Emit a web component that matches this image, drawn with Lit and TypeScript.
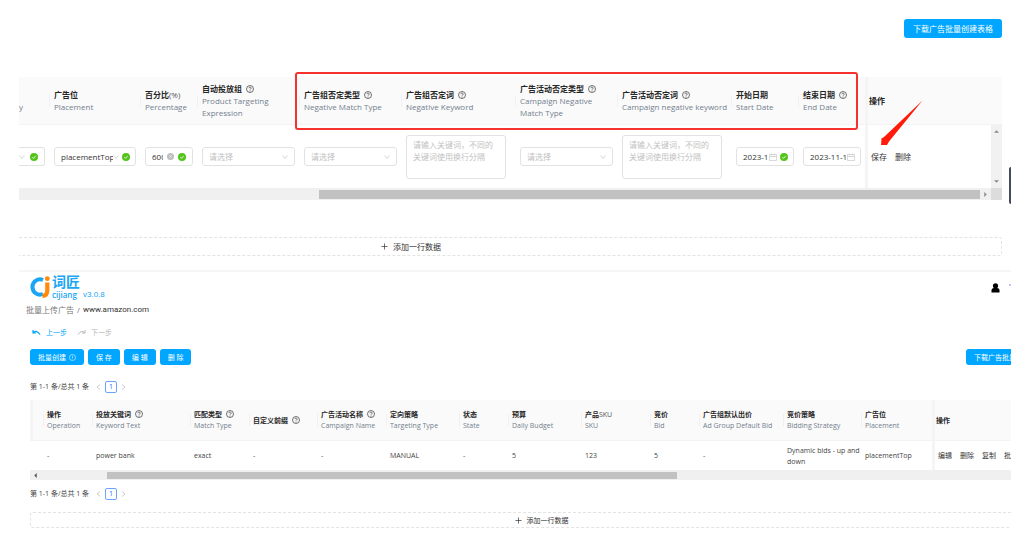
import { LitElement, html, css, svg, nothing } from "lit";
import { customElement } from "lit/decorators.js";

const help = html`<svg class="ic" viewBox="0 0 16 16" aria-hidden="true">
  <circle cx="8" cy="8" r="7" fill="none" stroke="currentColor" stroke-width="1.5" />
  <path d="M5.8 6.4a2.2 2.2 0 1 1 3.2 1.9c-.7.4-1 .7-1 1.4" fill="none" stroke="currentColor" stroke-width="1.5" />
  <circle cx="8" cy="11.8" r="1" fill="currentColor" />
</svg>`;
const info = html`<svg class="ic info" viewBox="0 0 16 16" aria-hidden="true">
  <circle cx="8" cy="8" r="7" fill="none" stroke="currentColor" stroke-width="1.2" />
  <path d="M8 4v5M8 10.5v1.5" stroke="currentColor" stroke-width="1.3" />
</svg>`;
const ok = html`<svg class="ok" viewBox="0 0 16 16" aria-hidden="true">
  <circle cx="8" cy="8" r="8" fill="#52c41a" />
  <path d="M4.6 8.2l2.4 2.6 4.4-5" fill="none" stroke="#fff" stroke-width="1.6" />
</svg>`;
const clear = html`<svg class="clear" viewBox="0 0 16 16" aria-hidden="true">
  <circle cx="8" cy="8" r="8" fill="#bfbfbf" />
  <path d="M5.5 5.5l5 5M10.5 5.5l-5 5" stroke="#fff" stroke-width="1.2" />
</svg>`;
const chevron = html`<svg class="chev" viewBox="0 0 16 16" aria-hidden="true">
  <path d="M1.5 4l6.500 8 6.500-8" fill="none" stroke="#bfbfbf" stroke-width="1.7" />
</svg>`;
const calendar = html`<svg class="cal" viewBox="0 0 16 16" aria-hidden="true">
  <path d="M1 3h14v12H1zM1 7h14M5 1v4M11 1v4" fill="none" stroke="#c4c4c4" stroke-width="1.3" />
</svg>`;
const plus = html`<svg class="plus" viewBox="0 0 16 16" aria-hidden="true">
  <path d="M8 1v14M1 8h14" stroke="currentColor" stroke-width="1.6" />
</svg>`;
const tri = (dir: "up" | "down" | "left" | "right") => {
  const d = {
    up: "M0 6l4-4 4 4z",
    down: "M0 2l4 4 4-4z",
    left: "M6 0L2 4l4 4z",
    right: "M2 0l4 4-4 4z",
  }[dir];
  return html`<svg class="tri" viewBox="0 0 8 8" aria-hidden="true">${svg`<path d=${d} fill="currentColor"/>`}</svg>`;
};

interface Col {
  zh: string;
  tail?: string;
  en?: string[];
  q?: boolean;
  w: string;
  value?: string;
}

const formCols: Col[] = [
  { zh: "广告位", en: ["Placement"], w: "w91" },
  { zh: "百分比", tail: "(%)", en: ["Percentage"], w: "w57" },
  { zh: "自动投放组", en: ["Product Targeting", "Expression"], q: true, w: "w102" },
  { zh: "广告组否定类型", en: ["Negative Match Type"], q: true, w: "w102" },
  { zh: "广告组否定词", en: ["Negative Keyword"], q: true, w: "w114" },
  { zh: "广告活动否定类型", en: ["Campaign Negative", "Match Type"], q: true, w: "w102" },
  { zh: "广告活动否定词", en: ["Campaign negative keyword"], q: true, w: "w114" },
  { zh: "开始日期", en: ["Start Date"], w: "w67" },
  { zh: "结束日期", en: ["End Date"], q: true, w: "w67" },
];

const listCols: Col[] = [
  { zh: "操作", en: ["Operation"], w: "w49", value: "-" },
  { zh: "投放关键词", en: ["Keyword Text"], q: true, w: "w98", value: "power bank" },
  { zh: "匹配类型", en: ["Match Type"], q: true, w: "w59", value: "exact" },
  { zh: "自定义前缀", q: true, w: "w68", value: "-" },
  { zh: "广告活动名称", en: ["Campaign Name"], q: true, w: "w69", value: "-" },
  { zh: "定向策略", en: ["Targeting Type"], w: "w73", value: "MANUAL" },
  { zh: "状态", en: ["State"], w: "w49", value: "-" },
  { zh: "预算", en: ["Daily Budget"], w: "w73", value: "5" },
  { zh: "产品", tail: "SKU", en: ["SKU"], w: "w69", value: "123" },
  { zh: "竞价", en: ["Bid"], w: "w49", value: "5" },
  { zh: "广告组默认出价", en: ["Ad Group Default Bid"], w: "w84", value: "-" },
  { zh: "竞价策略", en: ["Bidding Strategy"], w: "w78", value: "Dynamic bids - up and down" },
  { zh: "广告位", en: ["Placement"], w: "w71", value: "placementTop" },
];

const base = css`
  * { box-sizing: border-box; }
  button, input, select, textarea { font: inherit; color: inherit; margin: 0; }
  button { cursor: pointer; }
  table { border-collapse: separate; border-spacing: 0; table-layout: fixed; width: 100%; }
  th { background: #fafafa; text-align: left; font-weight: 400; padding: 0 0 0 5px; white-space: nowrap; position: relative; border-bottom: 1px solid #f3f3f3; }
  th b { font-weight: 700; color: #262626; }
  th small { display: block; font-size: inherit; color: #737f8e; }
  th .tail { color: #555; }
  th.sep::before { content: ""; position: absolute; left: 0; top: 50%; height: 12px; margin-top: -6px; width: 1px; background: #f0f0f0; }
  td { padding: 0 5px; vertical-align: middle; }
  .fixed { border-left: 3px solid #f5f5f5; }
  .ic { width: 8px; height: 8px; margin-left: 4px; vertical-align: -1px; color: #444; }
  .primary { background: #00a6ff; color: #fff; border: 0; border-radius: 3px; padding: 0 8px; white-space: nowrap; }
  .add { display: flex; align-items: center; justify-content: center; gap: 5px; width: 100%; background: #fff; border: 1px dashed #e3e3e3; border-radius: 3px; }
  .plus { width: 7px; height: 7px; }
  .tri { width: 5px; height: 5px; color: #8a8a8a; flex: none; }
  .hbar { display: flex; align-items: center; background: #f0f0f0; }
  .thumb { background: #c1c1c1; }
  .ops { display: flex; gap: 8px; white-space: nowrap; }
  .ops a { color: #333; text-decoration: none; }
`;

const headCell = (c: Col) => html`<th class="sep" scope="col">
  <b>${c.zh}</b>${c.tail ? html`<span class="tail">${c.tail}</span>` : nothing}${c.q ? help : nothing}
  ${(c.en ?? []).map((t) => html`<small>${t}</small>`)}
</th>`;

@customElement("edit-panel")
class EditPanel extends LitElement {
  static styles = [
    base,
    css`
      :host { display: block; font-size: 8px; line-height: 12px; padding: 19px 9px 0 0; }
      .top { display: flex; justify-content: flex-end; margin-bottom: 39px; }
      .primary { height: 19px; padding: 0 9px; }
      .wrap { position: relative; }
      .lead { width: 30px; } .w91 { width: 91px; } .w57 { width: 57px; } .w102 { width: 102px; }
      .w114 { width: 114px; } .w67 { width: 67px; } .bar { width: 11px; }
      th { height: 48px; }
      .cut { padding: 12px 0 0; }
      td { height: 63px; padding: 0 4px 0 5px; }
      td.cutcell { padding: 0 4px 0 0; }
      .box { display: flex; align-items: center; gap: 4px; height: 19px; border: 1px solid #e2e2e2; border-radius: 3px; padding: 0 6px; background: #fff; }
      .box.open { border-left: 0; border-radius: 0 3px 3px 0; padding-left: 0; justify-content: space-between; }
      .box input, .box select { flex: 1; min-width: 0; width: 0; border: 0; padding: 0; background: none; appearance: none; outline: 0; height: 15px; color: #333; }
      .box select.empty { color: #bfbfbf; }
      .box.tight { gap: 0; padding-right: 5px; }
      .box.tight .ok { margin-left: 3px; }
      textarea { display: block; width: 100px; height: 44px; border: 1px solid #e2e2e2; border-radius: 3px; padding: 3px 6px; resize: none; background: #fff; overflow: hidden; }
      textarea::placeholder { color: #bfbfbf; }
      .ok { width: 8px; height: 8px; flex: none; }
      .clear { width: 7px; height: 7px; flex: none; }
      .chev { width: 6px; height: 6px; flex: none; }
      .cal { width: 8px; height: 8px; flex: none; }
      .fixed { padding-left: 1px; }
      td.fixed { padding-left: 3px; }
      td.bar { padding: 0; background: #f1f1f1; }
      .vbar { display: flex; flex-direction: column; align-items: center; justify-content: space-between; height: 63px; padding: 4px 0; }
      .hbar { height: 12px; }
      .track { flex: 1; height: 9px; padding-left: 30.5%; }
      .track .thumb { height: 9px; }
      .hbar .tri { margin: 0 3px; }
      .corner { width: 11px; height: 12px; background: #dcdcdc; }
      .mark { position: absolute; left: 276px; right: 144px; top: -5px; height: 58px; border: 2px solid #f5322d; border-radius: 3px; pointer-events: none; }
      .arrow { position: absolute; right: 79px; top: 23px; width: 43px; height: 46px; pointer-events: none; }
      .add { height: 19px; margin-top: 37px; border-left: 0; border-radius: 0 3px 3px 0; padding-right: 204px; }
    `,
  ];

  private pick(label: string) {
    return html`<div class="box">
      <select class="empty" aria-label=${label}><option>请选择</option></select>${chevron}
    </div>`;
  }

  private area(label: string) {
    return html`<textarea aria-label=${label} placeholder="请输入关键词，不同的关键词使用换行分隔"></textarea>`;
  }

  render() {
    return html`
      <div class="top"><button class="primary">下载广告批量创建表格</button></div>
      <div class="wrap">
        <table>
          <colgroup>
            <col class="lead" />${formCols.map((c) => html`<col class=${c.w} />`)}<col /><col class="bar" />
          </colgroup>
          <thead>
            <tr>
              <th class="cut" scope="col"><small>y</small></th>
              ${formCols.map(headCell)}
              <th class="fixed" colspan="2" scope="col"><b>操作</b></th>
            </tr>
          </thead>
          <tbody>
            <tr>
              <td class="cutcell"><div class="box open">${chevron}${ok}</div></td>
              <td><div class="box tight"><select aria-label="广告位"><option>placementTop</option></select>${chevron}${ok}</div></td>
              <td><div class="box"><input aria-label="百分比" value="600" />${clear}${ok}</div></td>
              <td>${this.pick("自动投放组")}</td>
              <td>${this.pick("广告组否定类型")}</td>
              <td>${this.area("广告组否定词")}</td>
              <td>${this.pick("广告活动否定类型")}</td>
              <td>${this.area("广告活动否定词")}</td>
              <td><div class="box tight"><input aria-label="开始日期" value="2023-11-10" />${calendar}${ok}</div></td>
              <td><div class="box tight"><input aria-label="结束日期" value="2023-11-10" />${calendar}</div></td>
              <td class="fixed"><div class="ops"><a href="#">保存</a><a href="#">删除</a></div></td>
              <td class="bar"><div class="vbar">${tri("up")}${tri("down")}</div></td>
            </tr>
          </tbody>
        </table>
        <div class="hbar">
          <div class="track"><div class="thumb"></div></div>
          ${tri("right")}
          <div class="corner"></div>
        </div>
        <div class="mark"></div>
        <svg class="arrow" viewBox="0 0 43 46" aria-hidden="true">
          <path d="M42.500 .500L9 41.500 7 45 1 45 1.500 38.500 4 37z" fill="#ff1a0a" />
        </svg>
      </div>
      <button class="add">${plus}<span>添加一行数据</span></button>
    `;
  }
}

@customElement("list-panel")
class ListPanel extends LitElement {
  static styles = [
    base,
    css`
      :host { display: block; overflow: hidden; font-size: 7px; line-height: 11px; border-top: 2px solid #f6f6f6; }
      .inner { margin-right: -41px; padding-left: 11px; }
      .brand { display: flex; align-items: flex-end; justify-content: space-between; height: 28px; }
      .logo { display: flex; align-items: flex-end; height: 28px; color: #1aa5f5; }
      .mark { width: 20px; height: 22px; margin: 0 2px 2px 0; }
      .name { display: flex; flex-direction: column; margin-right: 3px; }
      .name b { font-size: 14px; line-height: 14px; }
      .name i { font-style: normal; font-size: 8px; line-height: 11px; font-weight: 600; }
      .ver { font-family: "Liberation Sans", sans-serif; font-size: 8px; line-height: 11px; }
      .user { display: flex; align-items: flex-start; width: 61px; height: 17px; }
      .user svg { width: 9px; height: 10px; }
      .user span { width: 2px; height: 2px; margin: 1px 0 0 9px; background: #b9c4ff; }
      .crumb { display: flex; gap: 3px; font-size: 8px; line-height: 12px; margin: 4px 0 0 -4px; color: #777; }
      .crumb a { color: #777; text-decoration: none; }
      .crumb .here { color: #333; font-family: Roboto, sans-serif; }
      .steps { display: flex; gap: 10px; margin: 11px 0 11px 2px; }
      .steps button { display: flex; align-items: center; gap: 5px; border: 0; background: none; padding: 0; color: #00a6ff; height: 11px; }
      .steps button:disabled { color: #b8b8b8; }
      .steps svg { width: 9px; height: 7px; }
      .tools { display: flex; gap: 4px; }
      .tools .primary { height: 16px; }
      .tools .last { margin-left: auto; }
      .info { width: 7px; height: 7px; color: #fff; margin-left: 3px; }
      .pager { display: flex; align-items: center; height: 13px; color: #444; margin: 15px 0 7px; white-space: nowrap; }
      .pager.low { margin: 7px 0 12px; }
      .pager .arr { border: 0; background: none; padding: 0; color: #bbb; width: 5px; height: 12px; display: flex; align-items: center; }
      .pager .arr svg { width: 5px; height: 6px; }
      .pager .prev { margin-left: 7px; }
      .pager .cur { width: 12px; height: 12px; border: 1px solid #6aa4ff; border-radius: 2px; background: #fff; color: #2f6bff; padding: 0; line-height: 10px; margin: 0 4px; }
      .lead { width: 13px; } .w49 { width: 49px; } .w98 { width: 98px; } .w59 { width: 59px; } .w68 { width: 68px; }
      .w69 { width: 69px; } .w73 { width: 73px; } .w84 { width: 84px; } .w78 { width: 78px; } .w71 { width: 71px; }
      th { height: 41px; padding-left: 4px; }
      td { height: 29px; padding: 0 0 0 4px; color: #444; }
      .fixed { padding-left: 1px; }
      td.fixed { padding-left: 3px; }
      th.first { border-left: 3px solid #f5f5f5; }
      .hbar { height: 10px; }
      .hbar .tri { margin: 0 3px; color: #555; }
      .track { flex: 1; padding: 0 36.7% 0 66px; }
      .track .thumb { height: 7px; }
      .add { height: 16px; border-right: 0; }
    `,
  ];

  private pager(cls: string) {
    return html`<nav class="pager ${cls}" aria-label="分页">
      <span>第 1-1 条/总共 1 条</span>
      <button class="arr prev" aria-label="上一页"><svg viewBox="0 0 10 12"><path d="M8 1L2 6l6 5" fill="none" stroke="currentColor" stroke-width="1.5" /></svg></button>
      <button class="cur">1</button>
      <button class="arr" aria-label="下一页"><svg viewBox="0 0 10 12"><path d="M2 1l6 5-6 5" fill="none" stroke="currentColor" stroke-width="1.5" /></svg></button>
    </nav>`;
  }

  render() {
    return html`<div class="inner">
      <header class="brand">
        <div class="logo">
          <svg class="mark" viewBox="0 0 20 22" aria-hidden="true">
            <path d="M13 4A7.600 7.600 0 1 0 13 18" fill="none" stroke="#1aa5f5" stroke-width="4" />
            <path d="M17.300 6.500v8q0 5-4.800 5.500" fill="none" stroke="#ff8a0c" stroke-width="4.200" />
            <circle cx="17.300" cy="2.700" r="2.400" fill="#ff8a0c" />
          </svg>
          <div class="name"><b>词匠</b><i>cijiang</i></div>
          <span class="ver">v3.0.8</span>
        </div>
        <div class="user">
          <svg viewBox="0 0 9 10" aria-hidden="true">
            <circle cx="4.500" cy="2.800" r="2.600" />
            <path d="M.500 9.500V7.500Q.500 5 3 5h3q2.500 0 2.500 2.500v2z" />
          </svg>
          <span></span>
        </div>
      </header>
      <nav class="crumb"><a href="#">批量上传广告</a><span>/</span><span class="here">www.amazon.com</span></nav>
      <div class="steps">
        <button><svg viewBox="0 0 18 14" aria-hidden="true"><path d="M2 2v6h6M2.500 7.500Q9 1 16 11" fill="none" stroke="currentColor" stroke-width="2.400" /></svg>上一步</button>
        <button disabled><svg viewBox="0 0 18 14" aria-hidden="true"><path d="M16 2v6h-6M15.500 7.500Q9 1 2 11" fill="none" stroke="currentColor" stroke-width="2" /></svg>下一步</button>
      </div>
      <div class="tools">
        <button class="primary">批量创建${info}</button>
        <button class="primary">保 存</button>
        <button class="primary">编 辑</button>
        <button class="primary">删 除</button>
        <button class="primary last">下载广告批量创建表格</button>
      </div>
      ${this.pager("")}
      <table>
        <colgroup><col class="lead" />${listCols.map((c) => html`<col class=${c.w} />`)}<col /></colgroup>
        <thead>
          <tr>
            <th class="first"></th>
            ${listCols.map(headCell)}
            <th class="fixed" scope="col"><b>操作</b></th>
          </tr>
        </thead>
        <tbody>
          <tr>
            <td></td>
            ${listCols.map((c) => html`<td>${c.value}</td>`)}
            <td class="fixed">
              <div class="ops"><a href="#">编辑</a><a href="#">删除</a><a href="#">复制</a><a href="#">批量</a></div>
            </td>
          </tr>
        </tbody>
      </table>
      <div class="hbar">${tri("left")}<div class="track"><div class="thumb"></div></div></div>
      ${this.pager("low")}
      <button class="add">${plus}<span>添加一行数据</span></button>
    </div>`;
  }
}

@customElement("app-root")
class AppRoot extends LitElement {
  static styles = css`
    :host { display: block; position: relative; background: #fff; min-height: 100vh; padding: 0 22px 12px 19px; box-sizing: border-box; color: #333; font-family: "Open Sans", "Noto Sans CJK SC", sans-serif; }
    list-panel { margin-top: 14px; }
    .handle { position: absolute; right: 22px; top: 167px; width: 2px; height: 37px; background: #454b5e; border-radius: 2px 0 0 2px; }
  `;

  render() {
    return html`<edit-panel></edit-panel><list-panel></list-panel><div class="handle"></div>`;
  }
}
